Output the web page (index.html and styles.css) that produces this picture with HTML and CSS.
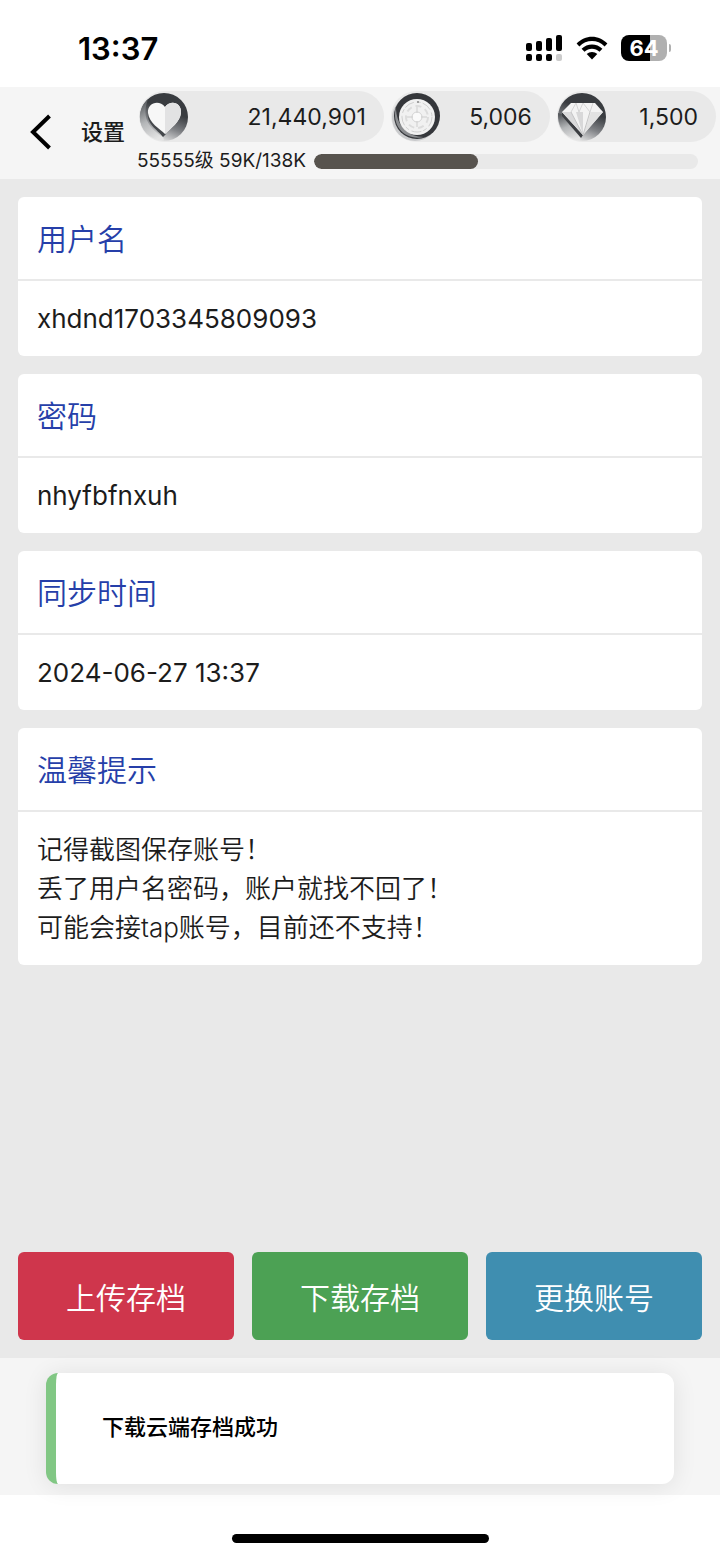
FILE: index.html
```html
<!DOCTYPE html>
<html lang="zh-CN">
<head>
	<meta charset="utf-8">
	<meta name="viewport" content="width=device-width, initial-scale=1">
	<title>设置</title>
	<link rel="stylesheet" href="styles.css">
</head>
<body>
	<div class="statusbar">
		<span class="time">13:37</span>
		<div class="status-icons">
			<svg class="signal" width="37" height="26" viewBox="0 0 37 26">
				<rect x="0" y="8" width="6" height="8" rx="2"/>
				<rect x="10" y="6" width="6" height="10" rx="2"/>
				<rect x="20" y="3" width="6" height="13" rx="2"/>
				<rect x="30" y="0" width="6" height="16" rx="2"/>
				<rect x="0" y="19" width="6" height="7" rx="2"/>
				<rect x="10" y="19" width="6" height="7" rx="2"/>
				<rect x="20" y="19" width="6" height="7" rx="2"/>
				<rect x="30" y="19" width="6" height="7" rx="2" fill="#ccc"/>
			</svg>
			<svg class="wifi" width="32" height="24" viewBox="0 0 32 24">
				<path d="M0.6 7.6 C9 -1.6 23 -1.6 31.4 7.6 L28.6 10.5 C21.6 3.2 10.4 3.2 3.4 10.5 Z"/>
				<path d="M5.6 12.8 C11.4 7 20.6 7 26.4 12.8 L23.5 15.7 C19.3 11.7 12.7 11.7 8.5 15.7 Z"/>
				<path d="M10.7 18 C13.7 15.2 18.3 15.2 21.3 18 L16 23.4 Z"/>
			</svg>
			<div class="battery"><span class="battery-level">64</span></div>
		</div>
	</div>

	<header class="topbar">
		<button class="back" type="button" aria-label="返回">
			<svg width="22" height="36" viewBox="0 0 22 36">
				<path d="M19.5 2 L3 18 L19.5 34" fill="none" stroke="#000" stroke-width="4"/>
			</svg>
		</button>
		<h1 class="title">设置</h1>
		<div class="stats">
			<div class="pills">
				<div class="pill">
					<svg width="50" height="50" viewBox="0 0 50 50">
						<defs>
							<linearGradient id="dark" x1="0.7" y1="0" x2="0.3" y2="1">
								<stop offset="0.35" stop-color="#393c40"/>
								<stop offset="0.65" stop-color="#808286"/>
								<stop offset="0.95" stop-color="#e6e6e6"/>
							</linearGradient>
							<linearGradient id="rim" x1="0.3" y1="0" x2="0.6" y2="1">
								<stop offset="0" stop-color="#55585c"/>
								<stop offset="0.5" stop-color="#b4b6b8"/>
								<stop offset="1" stop-color="#e4e4e4"/>
							</linearGradient>
						</defs>
						<circle cx="25" cy="25" r="24" fill="url(#dark)"/>
						<path d="M9 7 C-1 16 -2 31 7 41 C12 46 20 49 25 48 L24 45 C10 36 2 26 9 7 Z" fill="url(#rim)"/>
						<path d="M9 20 C7 32 18 37 24 45 L27 42 L12 20 Z" fill="#45484c"/>
						<path d="M26 42 C21 37 10 31 9 21 C8 11 20 7 26 15 C32 7 43 11 42 21 C41 30 32 36 26 42 Z" fill="#f7f7f7"/>
						<path d="M26 42 L26 15 C32 7 43 11 42 21 C41 30 32 36 26 42 Z" fill="#e2e2e3"/>
					</svg>
					<span>21,440,901</span>
				</div>
				<div class="pill">
					<svg width="50" height="50" viewBox="0 0 50 50">
						<circle cx="24" cy="26" r="23" fill="#c9cacc"/>
						<circle cx="26" cy="24" r="23" fill="#35373b"/>
						<path d="M5 15 C0 34 14 49 33 45 C17 45 5 34 5 15 Z" fill="#8b8d90"/>
						<circle cx="26" cy="25" r="18" fill="#f1f1f1"/>
						<circle cx="26" cy="25" r="15" fill="none" stroke="#d0d0d0" stroke-width="1" stroke-dasharray="10 3 4 2"/>
						<circle cx="26" cy="25" r="11" fill="none" stroke="#dcdcdc" stroke-width="2" stroke-dasharray="6 4"/>
						<circle cx="26" cy="25" r="5" fill="#fafafa" stroke="#d4d4d4" stroke-width="1"/>
						<path d="M26 15 V21 M26 29 V35 M16 25 H22 M30 25 H36" stroke="#cdcdcd" stroke-width="1"/>
						<circle cx="27" cy="10" r="1" fill="#888"/>
					</svg>
					<span>5,006</span>
				</div>
				<div class="pill">
					<svg width="50" height="50" viewBox="0 0 50 50">
						<circle cx="25" cy="25" r="24" fill="url(#dark)"/>
						<path d="M1 21 L5 22 L24 44 L23 48 C10 47 1 38 1 21 Z" fill="url(#rim)"/>
						<path d="M5 20 L26 43 L24 46 L5 24 Z" fill="#3c3e42"/>
						<path d="M5 20 L14 11 H38 L46 20 L26 43 Z" fill="#f3f3f3"/>
						<path d="M5 20 L14 20 L26 43 Z" fill="#dadadb"/>
						<path d="M19 20 L26 43 L26 20 Z" fill="#d8d8d9"/>
						<path d="M34 20 L26 43 L46 20 Z" fill="#e2e2e2"/>
						<path d="M14 20 L19 11 L22 20 L26 11 L33 20 L36 11" fill="none" stroke="#d4d4d5" stroke-width="1"/>
						<path d="M14 20 L26 43 L33 20" fill="none" stroke="#c4c4c5" stroke-width="1"/>
					</svg>
					<span>1,500</span>
				</div>
			</div>
			<div class="level">
				<label for="exp">55555级 59K/138K</label>
				<progress id="exp" value="59" max="138"></progress>
			</div>
		</div>
	</header>

	<main class="content">
		<section class="card">
			<h2>用户名</h2>
			<p>xhdnd1703345809093</p>
		</section>
		<section class="card">
			<h2>密码</h2>
			<p>nhyfbfnxuh</p>
		</section>
		<section class="card">
			<h2>同步时间</h2>
			<p>2024-06-27 13:37</p>
		</section>
		<section class="card">
			<h2>温馨提示</h2>
			<p class="tips">记得截图保存账号！<br>丢了用户名密码，账户就找不回了！<br>可能会接tap账号，目前还不支持！</p>
		</section>

		<div class="actions">
			<button class="btn upload" type="button">上传存档</button>
			<button class="btn download" type="button">下载存档</button>
			<button class="btn switch" type="button">更换账号</button>
		</div>
	</main>

	<footer class="tabbar"></footer>
	<div class="home-area"><div class="home-line"></div></div>

	<div class="toast" role="status">下载云端存档成功</div>
</body>
</html>
```
FILE: styles.css
```css
* {
  box-sizing: border-box;
}

body {
  margin: 0;
  min-height: 100vh;
  display: flex;
  flex-direction: column;
  position: relative;
  background-color: #fff;
  color: #1c1c1c;
  font-family: Inter, "Noto Sans CJK SC", sans-serif;
  font-size: 26px;
}

h1, h2, p {
  margin: 0;
}

button {
  border: 0;
  padding: 0;
  font-family: inherit;
}

/* status bar */
.statusbar {
  display: flex;
  align-items: center;
  justify-content: space-between;
  height: 87px;
  padding: 9px 53px 0 78px;
  color: #000;
}

.time {
  font-size: 31px;
  font-weight: 600;
}

.status-icons {
  display: flex;
  align-items: center;
  gap: 13px;
}

.battery {
  position: relative;
  width: 46px;
  height: 26px;
  border-radius: 8px;
  background: linear-gradient(to right, #000 64%, #b0b0b0 64%);
  text-align: center;
}

.battery::after {
  content: "";
  position: absolute;
  right: -4px;
  top: 9px;
  width: 2px;
  height: 8px;
  border-radius: 0 2px 2px 0;
  background-color: #b0b0b0;
}

.battery-level {
  display: block;
  color: #fff;
  font-size: 22px;
  font-weight: 700;
  line-height: 26px;
}

/* header */
.topbar {
  display: flex;
  align-items: center;
  padding: 4px 4px 6px 30px;
  background-color: #f5f5f5;
}

.back {
  display: flex;
  background: none;
}

.title {
  margin: 0 12px 0 29px;
  font-size: 22px;
  font-weight: 500;
  line-height: 32px;
}

.stats {
  flex: 1;
}

.pills {
  display: grid;
  grid-template-columns: 20fr 13fr 13fr;
  gap: 7px;
  padding-left: 2px;
}

.pill {
  display: flex;
  align-items: center;
  justify-content: space-between;
  height: 51px;
  padding-right: 18px;
  border-radius: 26px;
  background-color: #e9e9e9;
  font-size: 23px;
}

.level {
  display: flex;
  align-items: center;
  gap: 8px;
  margin-top: 7px;
  padding-right: 18px;
  font-size: 19px;
  line-height: 24px;
}

progress {
  flex: 1;
  min-width: 0;
  height: 15px;
  appearance: none;
  border: 0;
  border-radius: 8px;
  overflow: hidden;
  background-color: #e9e9e9;
}

progress::-webkit-progress-bar {
  background-color: #e9e9e9;
}

progress::-webkit-progress-value {
  border-radius: 8px;
  background-color: #57534e;
}

/* account cards */
.content {
  flex: 1;
  display: flex;
  flex-direction: column;
  gap: 18px;
  padding: 18px;
  background-color: #e9e9e9;
}

.card {
  border-radius: 6px;
  background-color: #fff;
}

.card h2 {
  padding: 20px 19px 18px;
  border-bottom: 2px solid #e9e9e9;
  color: #263fa9;
  font-size: 30px;
  font-weight: 350;
  line-height: 44px;
}

.card p {
  padding: 18px 19px;
  line-height: 39px;
}

.card .tips {
  font-weight: 350;
}

.actions {
  display: grid;
  grid-template-columns: repeat(3, 1fr);
  gap: 18px;
  margin-top: auto;
}

.btn {
  height: 88px;
  border-radius: 6px;
  color: #fff;
  font-size: 30px;
  font-weight: 350;
}

.upload {
  background-color: #cf364c;
}

.download {
  background-color: #4ca154;
}

.switch {
  background-color: #3f8eb0;
}

/* bottom */
.tabbar {
  height: 137px;
  background-color: #f5f5f5;
}

.home-area {
  display: flex;
  justify-content: center;
  height: 63px;
  padding-top: 39px;
}

.home-line {
  width: 257px;
  height: 9px;
  border-radius: 5px;
  background-color: #000;
}

.toast {
  position: absolute;
  left: 46px;
  right: 46px;
  bottom: 74px;
  padding: 38px 46px 41px;
  border-left: 10px solid #81c784;
  border-radius: 12px;
  background-color: #fff;
  box-shadow: 0 2px 24px rgba(0, 0, 0, 0.09);
  color: #000;
  font-size: 22px;
  font-weight: 500;
  line-height: 32px;
}
```
